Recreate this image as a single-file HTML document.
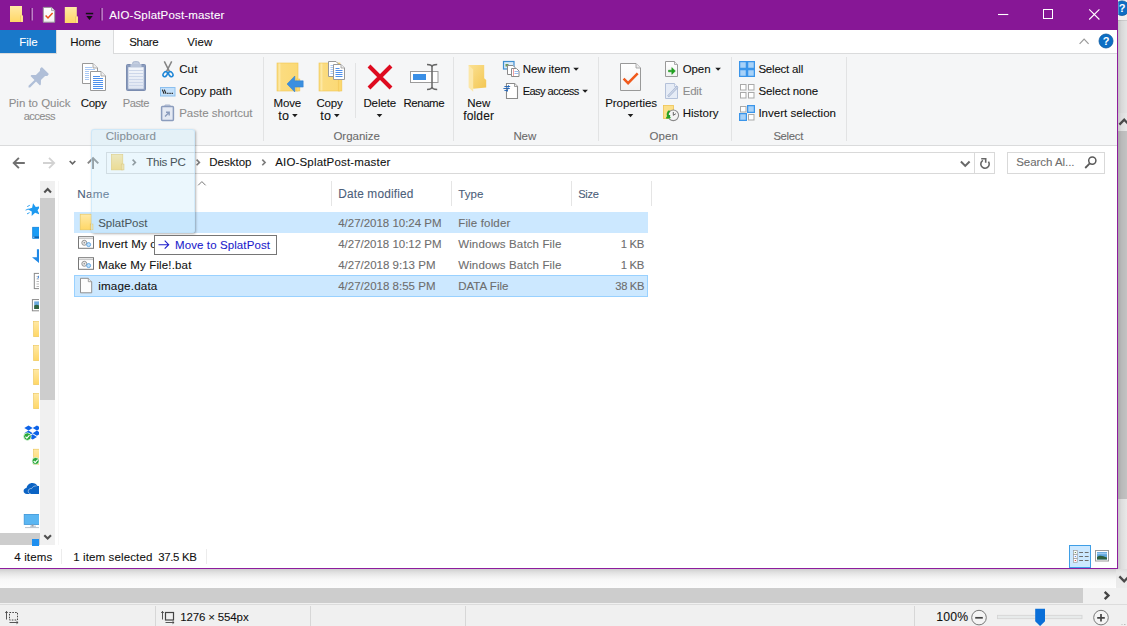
<!DOCTYPE html>
<html lang="en">
<head>
<meta charset="utf-8">
<title>AIO-SplatPost-master</title>
<style>
*{box-sizing:border-box;margin:0;padding:0}
html,body{width:1127px;height:626px;overflow:hidden;background:#fff}
body{position:relative;font-family:"Liberation Sans",sans-serif;font-size:11.5px;color:#111}
.a{position:absolute}
.t{position:absolute;white-space:nowrap;line-height:16px;height:16px;-webkit-text-stroke:.09px currentColor}
.g{color:#8d8d8d}
.d{color:#6d6d6d}
.h{color:#4c607a}
.lbl{color:#6b6b6b}
svg{position:absolute;left:0;top:0;overflow:hidden}
.sep{position:absolute;width:1px;background:#e2e3e4}
</style>
</head>
<body>

<!-- ============ Paint surroundings (outside the explorer window) ============ -->
<div class="a" style="left:1118px;top:0;width:9px;height:626px;background:#f0f0f0"></div>
<div class="a" style="left:1118px;top:20px;width:9px;height:93px;background:#ebebeb;border-top:1px solid #d6d6d6"></div>
<div class="a" style="left:1118px;top:113px;width:9px;height:475px;background:#f0f0f0"></div>
<div class="a" style="left:1118px;top:131px;width:9px;height:368px;background:#c9c9c9"></div>
<div class="a" style="left:1118px;top:20px;width:9px;height:549px;background:linear-gradient(90deg,rgba(0,0,0,.17) 0,rgba(0,0,0,.08) 40%,rgba(0,0,0,.03) 100%)"></div>
<div class="a" style="left:1116px;top:569px;width:11px;height:19px;background:linear-gradient(180deg,#dcdcdc 0,#e8e8e8 4px,#ececec 100%)"></div>
<div class="a" style="left:0;top:569px;width:1116px;height:19px;border-bottom-right-radius:3px;background:linear-gradient(180deg,#cdcdcd 0,#dfdfdf 3px,#eeeeee 7px,#f8f8f8 11px,#fcfcfc 100%)"></div>
<div class="a" style="left:0;top:588px;width:1127px;height:16px;background:#f0f0f0"></div>
<div class="a" style="left:0;top:588px;width:1083px;height:15px;background:#cdcdcd"></div>
<div class="a" style="left:0;top:604px;width:1127px;height:22px;background:#f0f0f0;border-top:1px solid #dcdcdc"></div>
<div class="a" style="left:155px;top:606px;width:1px;height:20px;background:#d7d7d7"></div>
<div class="a" style="left:310px;top:606px;width:1px;height:20px;background:#d7d7d7"></div>
<div class="a" style="left:465px;top:606px;width:1px;height:20px;background:#d7d7d7"></div>
<div class="a" style="left:914px;top:606px;width:1px;height:20px;background:#d7d7d7"></div>

<!-- ============ Explorer window ============ -->
<div class="a" style="left:0;top:0;width:1118px;height:569px;background:#fff;border-right:1px solid #8e1c9e;border-bottom:1px solid #8e1c9e"></div>
<div class="a" style="left:0;top:0;width:1118px;height:30px;background:#871796"></div>

<!-- tab row -->
<div class="a" style="left:0;top:30px;width:1117px;height:24px;background:#fff;border-bottom:1px solid #dadbdc"></div>
<div class="a" style="left:0;top:30px;width:56px;height:23px;background:#1979ca"></div>
<div class="a" style="left:56px;top:30px;width:58px;height:24px;background:#f5f6f7;border-left:1px solid #dadbdc;border-right:1px solid #dadbdc"></div>

<!-- ribbon -->
<div class="a" style="left:0;top:54px;width:1117px;height:92px;background:#f5f6f7;border-bottom:1px solid #dadbdc"></div>
<div class="sep" style="left:263px;top:57px;height:84px"></div>
<div class="sep" style="left:453px;top:57px;height:84px"></div>
<div class="sep" style="left:598px;top:57px;height:84px"></div>
<div class="sep" style="left:731px;top:57px;height:84px"></div>
<div class="sep" style="left:846px;top:57px;height:84px"></div>
<div class="sep" style="left:355px;top:63px;height:55px"></div>

<!-- address + search boxes -->
<div class="a" style="left:106px;top:152px;width:889px;height:22px;border:1px solid #d9d9d9;background:#fff"></div>
<div class="a" style="left:974px;top:153px;width:1px;height:20px;background:#d9d9d9"></div>
<div class="a" style="left:1007px;top:152px;width:98px;height:22px;border:1px solid #d9d9d9;background:#fff"></div>

<!-- nav pane scrollbar -->
<div class="a" style="left:58px;top:181px;width:1px;height:364px;background:#f7f7f7"></div>
<div class="a" style="left:40px;top:181px;width:15px;height:364px;background:#f0f0f0"></div>
<div class="a" style="left:40px;top:198px;width:15px;height:202px;background:#cdcdcd"></div>
<div class="a" style="left:0;top:533px;width:40px;height:12px;background:#cdcdcd"></div>

<!-- list header separators -->
<div class="a" style="left:331px;top:181px;width:1px;height:25px;background:#e5e5e5"></div>
<div class="a" style="left:451px;top:181px;width:1px;height:25px;background:#e5e5e5"></div>
<div class="a" style="left:571px;top:181px;width:1px;height:25px;background:#e5e5e5"></div>
<div class="a" style="left:651px;top:181px;width:1px;height:25px;background:#e5e5e5"></div>

<!-- rows -->
<div class="a" style="left:74px;top:212px;width:574px;height:21px;background:#cce8ff"></div>
<div class="a" style="left:74px;top:275px;width:574px;height:22px;background:#cce8ff;border:1px solid #99d1ff"></div>

<!-- status bar separators -->
<div class="a" style="left:61px;top:549px;width:1px;height:15px;background:#ececec"></div>
<div class="a" style="left:206px;top:549px;width:1px;height:15px;background:#ececec"></div>

<!-- ============ text ============ -->
<div class="t" id="t0" style="left:109.2px;top:7.0px;letter-spacing:0.173px;color:#fff">AIO-SplatPost-master</div>
<div class="t" id="t1" style="left:19.2px;top:34.0px;letter-spacing:-0.058px;color:#fff">File</div>
<div class="t" id="t2" style="left:70.2px;top:34.0px;letter-spacing:-0.097px;">Home</div>
<div class="t" id="t3" style="left:129.2px;top:34.0px;letter-spacing:-0.277px;">Share</div>
<div class="t" id="t4" style="left:187.2px;top:34.0px;letter-spacing:0.145px;">View</div>
<div class="t g" id="t5" style="left:8.7px;top:95.0px;letter-spacing:-0.017px;">Pin to Quick</div>
<div class="t g" id="t6" style="left:23.7px;top:108.0px;font-size:11.10px;letter-spacing:-0.539px;">access</div>
<div class="t" id="t7" style="left:80.7px;top:95.0px;letter-spacing:-0.265px;">Copy</div>
<div class="t g" id="t8" style="left:122.7px;top:95.0px;font-size:11.10px;letter-spacing:-0.415px;">Paste</div>
<div class="t" id="t9" style="left:179.2px;top:61.0px;letter-spacing:0.131px;">Cut</div>
<div class="t" id="t10" style="left:179.2px;top:83.0px;letter-spacing:0.040px;">Copy path</div>
<div class="t g" id="t11" style="left:179.2px;top:105.0px;letter-spacing:-0.015px;">Paste shortcut</div>
<div class="t lbl" id="t12" style="left:105.7px;top:128.0px;letter-spacing:0.118px;">Clipboard</div>
<div class="t" id="t13" style="left:273.4px;top:95.0px;letter-spacing:-0.081px;">Move</div>
<div class="t" id="t14" style="left:278.2px;top:108.0px;font-size:12.60px;letter-spacing:0.392px;">to</div>
<div class="t" id="t15" style="left:316.4px;top:95.0px;letter-spacing:-0.190px;">Copy</div>
<div class="t" id="t16" style="left:320.2px;top:108.0px;font-size:12.60px;letter-spacing:0.392px;">to</div>
<div class="t" id="t17" style="left:363.4px;top:95.0px;letter-spacing:-0.075px;">Delete</div>
<div class="t" id="t18" style="left:403.4px;top:95.0px;font-size:11.43px;letter-spacing:-0.398px;">Rename</div>
<div class="t lbl" id="t19" style="left:333.4px;top:128.0px;letter-spacing:-0.009px;">Organize</div>
<div class="t" id="t20" style="left:467.2px;top:95.0px;letter-spacing:0.095px;">New</div>
<div class="t" id="t21" style="left:463.2px;top:108.0px;font-size:12.04px;letter-spacing:0.148px;">folder</div>
<div class="t" id="t22" style="left:522.7px;top:61.0px;letter-spacing:-0.080px;">New item</div>
<div class="t" id="t23" style="left:522.7px;top:83.0px;font-size:11.10px;letter-spacing:-0.571px;">Easy access</div>
<div class="t lbl" id="t24" style="left:513.4px;top:128.0px;letter-spacing:-0.072px;">New</div>
<div class="t" id="t25" style="left:605.2px;top:95.0px;letter-spacing:-0.062px;">Properties</div>
<div class="t" id="t26" style="left:682.7px;top:61.0px;letter-spacing:-0.085px;">Open</div>
<div class="t g" id="t27" style="left:682.7px;top:83.0px;letter-spacing:-0.207px;">Edit</div>
<div class="t" id="t28" style="left:682.7px;top:105.0px;">History</div>
<div class="t lbl" id="t29" style="left:649.4px;top:128.0px;letter-spacing:0.115px;">Open</div>
<div class="t" id="t30" style="left:758.4px;top:61.0px;letter-spacing:-0.207px;">Select all</div>
<div class="t" id="t31" style="left:758.4px;top:83.0px;letter-spacing:-0.105px;">Select none</div>
<div class="t" id="t32" style="left:758.4px;top:105.0px;letter-spacing:0.015px;">Invert selection</div>
<div class="t lbl" id="t33" style="left:773.4px;top:128.0px;font-size:11.28px;letter-spacing:-0.285px;">Select</div>
<div class="t" id="t34" style="left:146.2px;top:154.0px;letter-spacing:-0.229px;">This PC</div>
<div class="t" id="t35" style="left:209.2px;top:154.0px;letter-spacing:0.016px;">Desktop</div>
<div class="t" id="t36" style="left:275.2px;top:154.0px;letter-spacing:0.173px;">AIO-SplatPost-master</div>
<div class="t d" id="t37" style="left:1016.2px;top:154.0px;letter-spacing:-0.043px;">Search Al...</div>
<div class="t h" id="t38" style="left:77.2px;top:186.0px;font-size:11.76px;letter-spacing:0.239px;">Name</div>
<div class="t h" id="t39" style="left:338.2px;top:186.0px;font-size:11.86px;letter-spacing:0.164px;">Date modified</div>
<div class="t h" id="t40" style="left:458.2px;top:186.0px;letter-spacing:0.091px;">Type</div>
<div class="t h" id="t41" style="left:578.2px;top:186.0px;font-size:11.10px;letter-spacing:-0.323px;">Size</div>
<div class="t" id="t42" style="left:98.2px;top:215.0px;letter-spacing:0.007px;">SplatPost</div>
<div class="t" id="t43" style="left:98.4px;top:236.0px;letter-spacing:0.133px;">Invert My c</div>
<div class="t" id="t44" style="left:98.2px;top:257.0px;letter-spacing:0.150px;">Make My File!.bat</div>
<div class="t" id="t45" style="left:98.2px;top:278.0px;font-size:11.64px;letter-spacing:0.177px;">image.data</div>
<div class="t d" id="t46" style="left:338.2px;top:215.0px;letter-spacing:-0.016px;">4/27/2018 10:24 PM</div>
<div class="t d" id="t47" style="left:338.2px;top:236.0px;letter-spacing:-0.016px;">4/27/2018 10:12 PM</div>
<div class="t d" id="t48" style="left:338.2px;top:257.0px;letter-spacing:0.007px;">4/27/2018 9:13 PM</div>
<div class="t d" id="t49" style="left:338.2px;top:278.0px;letter-spacing:0.007px;">4/27/2018 8:55 PM</div>
<div class="t d" id="t50" style="left:458.2px;top:215.0px;letter-spacing:0.164px;">File folder</div>
<div class="t d" id="t51" style="left:458.2px;top:236.0px;letter-spacing:0.129px;">Windows Batch File</div>
<div class="t d" id="t52" style="left:458.2px;top:257.0px;letter-spacing:0.129px;">Windows Batch File</div>
<div class="t d" id="t53" style="left:458.2px;top:278.0px;letter-spacing:0.026px;">DATA File</div>
<div class="t d" id="t54" style="left:620.8px;top:236.0px;font-size:11.38px;letter-spacing:-0.343px;">1 KB</div>
<div class="t d" id="t55" style="left:620.8px;top:257.0px;font-size:11.38px;letter-spacing:-0.343px;">1 KB</div>
<div class="t d" id="t56" style="left:615.3px;top:278.0px;font-size:11.20px;letter-spacing:-0.337px;">38 KB</div>
<div class="t" id="t57" style="left:14.2px;top:549.0px;letter-spacing:0.175px;">4 items</div>
<div class="t" id="t58" style="left:73.2px;top:549.0px;letter-spacing:0.129px;">1 item selected</div>
<div class="t" id="t59" style="left:158.2px;top:549.0px;font-size:11.40px;letter-spacing:-0.319px;">37.5 KB</div>
<div class="t" id="t60" style="left:180.2px;top:609.0px;letter-spacing:-0.144px;">1276 × 554px</div>
<div class="t" id="t61" style="left:936.2px;top:609.0px;font-size:12.28px;letter-spacing:0.231px;">100%</div>

<!-- ============ icons (below overlays) ============ -->
<svg width="1127" height="626" viewBox="0 0 1127 626">

<defs>
 <linearGradient id="fy" x1="0" y1="0" x2="0" y2="1"><stop offset="0" stop-color="#ffe9a6"/><stop offset="1" stop-color="#ffd766"/></linearGradient>
 <linearGradient id="fy2" x1="0" y1="0" x2="1" y2="0"><stop offset="0" stop-color="#e8b94a"/><stop offset=".35" stop-color="#ffe08a"/><stop offset="1" stop-color="#ffe08a"/></linearGradient>
 <linearGradient id="pg" x1="0" y1="0" x2="0" y2="1"><stop offset="0" stop-color="#ffffff"/><stop offset="1" stop-color="#f1f1f1"/></linearGradient>
</defs>
<!-- title bar: folder -->
<g id="tb-folder1">
 <rect x="10" y="6" width="12" height="16" fill="url(#fy)"/>
 <rect x="20" y="15.4" width="3" height="6.6" fill="url(#fy2)"/>
</g>
<g id="tb-sep1"><rect x="30.2" y="8" width="1.2" height="12.5" fill="#66106f"/><rect x="31.6" y="8" width="1.3" height="12.5" fill="#c28ecb"/></g>
<g id="tb-props">
 <path d="M43.3 7.4h8.2l3.2 3.2v11.6H43.3z" fill="url(#pg)" stroke="#9b9b9b" stroke-width="1"/>
 <path d="M51.5 7.4v3.2h3.2" fill="#e6e6e6" stroke="#9b9b9b" stroke-width=".8"/>
 <path d="M45.6 15.4l2.4 2.5 4.6-4.9" fill="none" stroke="#e8501a" stroke-width="1.5"/>
</g>
<g id="tb-folder2">
 <rect x="64.8" y="7" width="12" height="16" fill="url(#fy)"/>
 <rect x="75" y="16.4" width="3" height="6.6" fill="url(#fy2)"/>
</g>
<g id="tb-dd"><rect x="85.8" y="12.8" width="7.4" height="1.5" fill="#111"/><path d="M86.3 16h6.4l-3.2 4z" fill="#111"/></g>
<g id="tb-sep2"><rect x="100.1" y="8" width="1.2" height="12.5" fill="#66106f"/><rect x="101.5" y="8" width="1.3" height="12.5" fill="#c28ecb"/></g>

<!-- window controls -->
<g id="wc" fill="none" stroke="#fff" stroke-width="1.1">
 <path d="M998 14.500h10.300"/>
 <rect x="1043.500" y="9.500" width="9" height="9" stroke-width="1"/>
 <path d="M1089.2 9.3l10.2 10.2M1099.4 9.3l-10.2 10.2"/>
</g>
<!-- ribbon collapse chevron + help -->
<path d="M1079.6 43.8l4.5-4.7 4.5 4.7" fill="none" stroke="#9a9a9a" stroke-width="1.2"/>
<g id="help">
 <circle cx="1106" cy="41" r="7" fill="#0c6ec4" stroke="#0a58a0" stroke-width=".8"/>
</g>

<text x="1106" y="45" text-anchor="middle" font-family="Liberation Sans, sans-serif" font-weight="bold" font-size="11" fill="#fff">?</text>
<clipPath id="rclip"><rect x="1118.300" y="0" width="9" height="626"/></clipPath>
<g clip-path="url(#rclip)"><circle cx="1122" cy="8.200" r="7.300" fill="#0c6ec4" stroke="#0a58a0" stroke-width=".8"/>
<text x="1122" y="12.300" text-anchor="middle" font-family="Liberation Sans, sans-serif" font-weight="bold" font-size="11" fill="#fff">?</text></g>

<defs>
 <linearGradient id="fold" x1="0" y1="0" x2="1" y2="0"><stop offset="0" stop-color="#f7d774"/><stop offset=".12" stop-color="#fde8a4"/><stop offset=".2" stop-color="#fbdc80"/><stop offset="1" stop-color="#fbd974"/></linearGradient>
 <linearGradient id="nf" x1="0" y1="0" x2="1" y2="1"><stop offset="0" stop-color="#fbe193"/><stop offset="1" stop-color="#f3c652"/></linearGradient>
 <linearGradient id="clip" x1="0" y1="0" x2="0" y2="1"><stop offset="0" stop-color="#f3f6fb"/><stop offset="1" stop-color="#dfe6f2"/></linearGradient>
</defs>
<!-- Pin to Quick access (disabled) -->
<g id="i-pin" transform="translate(35.75 80.2) rotate(45)" fill="#b0bfd8" stroke="none">
 <path d="M-4.3 -13.600h8.600a.8 .8 0 0 1 .8 .8v1.600l-1.500 1.700v5.700l3.100 3.300v1.200h-5.600v8.400l-1.100 1.100l-1.100 -1.100v-8.400h-5.600v-1.200l3.100 -3.300v-5.700l-1.500 -1.700v-1.600a.8 .8 0 0 1 .8 -.8z"/>
</g>
<!-- Copy -->
<g id="i-copy">
 <path d="M82.5 63.5h10.5l4.5 4.5v15.5h-15z" fill="#fff" stroke="#999"/>
 <path d="M93 63.5v4.5h4.5" fill="#efefef" stroke="#999" stroke-width=".8"/>
 <g stroke="#a9c9f5" stroke-width="1"><path d="M85 67.5h7M85 69.5h10M85 71.5h4M85 73.5h4M85 75.5h4M85 77.5h4M85 79.5h4"/></g>
 <path d="M90.5 71.5h10.5l4.500 4.5v14.500h-15z" fill="#fff" stroke="#999"/>
 <path d="M101 71.500v4.500h4.500" fill="#efefef" stroke="#999" stroke-width=".8"/>
 <g stroke="#4d90ec" stroke-width="1"><path d="M93 76.500h7M93 78.500h10M93 80.500h10M93 82.500h10M93 84.500h10M93 86.500h10M93 88.500h10"/></g>
</g>
<!-- Paste (disabled look) -->
<g id="i-paste">
 <rect x="132.600" y="61.625" width="6.750" height="4.500" rx="1.800" fill="#c4cee0" stroke="#9aa9c6" stroke-width=".8"/>
 <rect x="126.500" y="64.500" width="19" height="26" rx="1" fill="#8b9cbd" stroke="#7a8cb0"/>
 <rect x="128.300" y="67.200" width="15.400" height="21.600" fill="url(#clip)"/>
 <g stroke="#cdd7ea" stroke-width="1"><path d="M128.300 70.500h15.400M128.300 73.500h15.400M128.300 76.500h15.400M128.300 79.500h15.400M128.300 82.500h15.400M128.300 85.500h15.400"/></g>
 <rect x="130.500" y="64" width="11" height="3.200" fill="#b9c5da"/>
</g>
<!-- Cut -->
<g id="i-cut">
 <path d="M164.300 61.300l5.200 10.400M171.700 61.300l-5.200 10.400" stroke="#848484" stroke-width="1.500" fill="none"/>
 <ellipse cx="165.200" cy="74.200" rx="1.900" ry="2.700" fill="none" stroke="#1e86d6" stroke-width="1.500" transform="rotate(35 165.200 74.200)"/>
 <ellipse cx="170.800" cy="74.200" rx="1.900" ry="2.700" fill="none" stroke="#1e86d6" stroke-width="1.500" transform="rotate(-35 170.800 74.200)"/>
</g>
<!-- Copy path -->
<g id="i-cpath">
 <rect x="160.500" y="87.500" width="14.500" height="8.500" fill="#c3e0fa" stroke="#8cc0ef"/>
 <path d="M162.300 89.600l1.800 4.200M164.300 89.600l1.800 4.200" stroke="#222" stroke-width="1.100"/>
 <path d="M167.200 93.300h1.300M169.400 93.300h1.300M171.600 93.300h1.300" stroke="#222" stroke-width="1.200"/>
</g>
<!-- Paste shortcut (disabled) -->
<g id="i-pshort">
 <rect x="164.700" y="104.900" width="5.600" height="3" rx="1" fill="#c4cee0" stroke="#9aa9c6" stroke-width=".7"/>
 <rect x="161.600" y="106.600" width="11.800" height="13.800" rx=".8" fill="#e4e9f3" stroke="#8b9cbd" stroke-width="1.500"/>
 <path d="M165 116.500l4-4M166 112.300h3.200v3.200" stroke="#8b9cbd" stroke-width="1.400" fill="none"/>
</g>

<!-- Move to -->
<g id="i-move">
 <rect x="277" y="63" width="21" height="28" fill="url(#fold)"/>
 <rect x="277" y="63" width="21" height="28" fill="none" stroke="#f1c653" stroke-width=".6"/>
 <rect x="296.200" y="79" width="3.700" height="12" fill="#fbd86f" stroke="#eec250" stroke-width=".5"/>
 <path d="M287 84l7.800-8v4.800h8.400v6.300h-8.400v4.900z" fill="#3a8fdf" stroke="#2f7fd0" stroke-width=".5"/>
</g>
<!-- Copy to -->
<g id="i-copyto">
 <rect x="319" y="63" width="21" height="28" fill="url(#fold)"/>
 <rect x="319" y="63" width="21" height="28" fill="none" stroke="#f1c653" stroke-width=".6"/>
 <rect x="338.200" y="79" width="3.700" height="12" fill="#fbd86f" stroke="#eec250" stroke-width=".5"/>
 <path d="M328.500 61.500h7.500l3.500 3.500v11.500h-11z" fill="#fff" stroke="#999"/>
 <g stroke="#a9c9f5" stroke-width="1"><path d="M330.500 65.500h5M330.500 67.500h3M330.500 69.500h3M330.500 71.500h3M330.500 73.500h3"/></g>
 <path d="M333.500 64.500h7.500l3.500 3.500v11.500h-11z" fill="#fff" stroke="#999"/>
 <path d="M341 64.500v3.500h3.500" fill="#eee" stroke="#999" stroke-width=".8"/>
 <g stroke="#4d90ec" stroke-width="1"><path d="M335.500 68.500h4M335.500 70.500h7M335.500 72.500h7M335.500 74.500h7M335.500 76.500h7"/></g>
</g>
<!-- Delete -->
<path id="i-del" d="M369 66l22 22M391 66l-22 22" stroke="#de0a1f" stroke-width="4" fill="none"/>
<!-- Rename -->
<g id="i-ren">
 <rect x="410.500" y="71.500" width="27.500" height="11" fill="#fff" stroke="#9c9c9c"/>
 <rect x="413" y="74" width="13" height="6" fill="#3a8fe6"/>
 <path d="M427 64.600c3 0 5 .6 5 2.600v19.600c0 2-2 2.600-5 2.600M437.200 64.600c-3 0-5.200.6-5.200 2.600M437.200 89.400c-3 0-5.200-.6-5.200-2.600" fill="none" stroke="#666" stroke-width="1.500"/>
</g>
<!-- New folder -->
<g id="i-newf">
 <path d="M468.600 65h15.600v13.200l2 1.800v7.600l-13 1.200z" fill="url(#nf)"/>
 <path d="M468.600 65l4.600 4.600v22.200l-4.600-4.200z" fill="#fce7a8"/>
</g>
<!-- New item -->
<g id="i-newi">
 <rect x="503.500" y="61.500" width="10.500" height="7.500" fill="#d6e9f8" stroke="#3e8ed0" stroke-width="1.200"/>
 <rect x="505.500" y="64" width="3" height="2.500" fill="#6a9a58"/>
 <path d="M507.500 65.500h5.500l2 2v7h-7.500z" fill="#fff" stroke="#8a8a8a"/>
 <path d="M511.500 68.500h5l2.500 2.500v5.500h-7.500z" fill="#fff" stroke="#8a8a8a"/>
 <path d="M513.500 69v7" stroke="#e88" stroke-width=".8"/>
 <path d="M514.500 71.500h4M514.500 73.500h4" stroke="#8fb5ee" stroke-width=".9"/>
</g>
<!-- Easy access -->
<g id="i-easy">
 <path d="M506.500 83.500h8l3 3v12h-11z" fill="#fff" stroke="#8a8a8a" stroke-width="1.100"/>
 <path d="M514.500 83.500v3h3" fill="#eee" stroke="#8a8a8a" stroke-width=".8"/>
 <path d="M504.400 86.500h5.800M503.400 88.500h6.400M504.400 90.500h3.200" stroke="#1f62b4" stroke-width=".9" fill="none"/>
 <path d="M508.600 85.200l-1.500 6.600" stroke="#1f62b4" stroke-width=".9" fill="none"/>
</g>
<!-- Properties -->
<g id="i-prop">
 <path d="M620.500 63.500h15.500l4.500 4.500v22.500h-20z" fill="url(#pg)" stroke="#999"/>
 <path d="M636 63.500v4.500h4.500" fill="#ececec" stroke="#999" stroke-width=".8"/>
 <path d="M623.600 78.600l4.500 4.600 9.600-9.800" fill="none" stroke="#f05a1c" stroke-width="2.500"/>
</g>
<!-- Open -->
<g id="i-open">
 <path d="M665.500 61.500h9l3 3v12h-12z" fill="url(#pg)" stroke="#999"/>
 <path d="M674.500 61.500v3h3" fill="#ececec" stroke="#999" stroke-width=".8"/>
 <path d="M668.500 70.200h3.300v-2.600l3.600 3.400-3.600 3.400v-2.600h-3.300z" fill="#1fa51f" stroke="#178a17" stroke-width=".5"/>
</g>
<!-- Edit (disabled) -->
<g id="i-edit">
 <path d="M665.500 83.500h9l3 3v12h-12z" fill="#e6ecf6" stroke="#b4c1d9"/>
 <path d="M674.500 83.500v3h3" fill="#f3f6fb" stroke="#b4c1d9" stroke-width=".8"/>
 <path d="M668 96.500l9.600-9.800" stroke="#a9b7d2" stroke-width="2.400"/>
 <path d="M668.300 96.200l8.900-9.100" stroke="#eef2f9" stroke-width=".8"/>
</g>
<!-- History -->
<g id="i-hist">
 <rect x="663.500" y="105.500" width="10" height="13" fill="#fce08a" stroke="#efc452" stroke-width=".8"/>
 <circle cx="673.300" cy="115.300" r="5.300" fill="#f4f4f4" stroke="#8a8a8a" stroke-width="1.100"/>
 <path d="M673.300 115.300v-3.300M673.300 115.300l2.600-1.600" stroke="#555" stroke-width=".9"/>
 <path d="M669.600 110.800c-2.400 1.600-2.600 4.800-.6 6.600l-2.800.4M669 117.400l.2-2.600" stroke="#23a023" stroke-width="2" fill="none"/>
</g>
<!-- Select all -->
<g id="i-sall" fill="#a8d2f8" stroke="#3a95ea" stroke-width="1.250">
 <rect x="739.625" y="61.625" width="6.750" height="6.750"/><rect x="747.625" y="61.625" width="6.750" height="6.750"/>
 <rect x="739.625" y="69.625" width="6.750" height="6.750"/><rect x="747.625" y="69.625" width="6.750" height="6.750"/>
</g>
<!-- Select none -->
<g id="i-snone" fill="#fff" stroke="#a9a9a9" stroke-width="1">
 <rect x="740.500" y="84.500" width="5.500" height="5.500"/><rect x="748.500" y="84.500" width="5.500" height="5.500"/>
 <rect x="740.500" y="92.500" width="5.500" height="5.500"/><rect x="748.500" y="92.500" width="5.500" height="5.500"/>
</g>
<!-- Invert selection -->
<g id="i-sinv">
 <rect x="740.500" y="106.500" width="5.500" height="5.500" fill="#fff" stroke="#a9a9a9"/>
 <rect x="748.500" y="114.500" width="5.500" height="5.500" fill="#fff" stroke="#a9a9a9"/>
 <rect x="747.625" y="105.625" width="6.750" height="6.750" fill="#a8d2f8" stroke="#3a95ea" stroke-width="1.250"/>
 <rect x="739.625" y="113.625" width="6.750" height="6.750" fill="#a8d2f8" stroke="#3a95ea" stroke-width="1.250"/>
</g>
<!-- dropdown triangles -->
<g id="dd" fill="#1e1e1e">
 <path d="M292.100 114.100h5.600l-2.800 3.100z"/><path d="M334 114.100h5.600l-2.800 3.100z"/>
 <path d="M376.700 114.100h5.600l-2.800 3.100z"/><path d="M627.700 114.100h5.600l-2.800 3.100z"/>
 <path d="M573.300 67.700h5.600l-2.800 3.100z"/><path d="M582.300 89.700h5.600l-2.800 3.100z"/>
 <path d="M715.300 67.700h5.600l-2.800 3.100z"/>
</g>


<!-- nav arrows -->
<g id="nav-arrows" fill="none" stroke-linecap="butt">
 <path d="M24.800 163h-10.800M18.900 157.800l-5.200 5.200 5.200 5.200" stroke="#707070" stroke-width="1.900"/>
 <path d="M43 163h10.800M49 157.800l5.200 5.200-5.200 5.200" stroke="#d2d2d2" stroke-width="1.800"/>
 <path d="M69.700 161l2.800 2.800 2.800-2.800" stroke="#666" stroke-width="1.700"/>
 <path d="M93.050 169v-10.600M87.800 163.400l5.250-5.250 5.250 5.250" stroke="#858585" stroke-width="1.900"/>
</g>
<!-- address bar folder + chevrons -->
<g id="addr-folder">
 <rect x="111.300" y="154.300" width="11.500" height="15.600" fill="url(#fy)" stroke="#ecc455" stroke-width=".6"/>
 <rect x="121.200" y="164" width="2.800" height="5.900" fill="#ffe292" stroke="#e6ba4a" stroke-width=".5"/>
</g>
<g id="addr-chev" fill="none" stroke="#7c7c7c" stroke-width="1.600">
 <path d="M132.600 159.600l2.800 2.800-2.800 2.800"/>
 <path d="M196.600 159.600l2.800 2.800-2.800 2.800"/>
 <path d="M262.300 159.600l2.800 2.800-2.800 2.800"/>
 <path d="M960.900 161.500l4.350 4.350 4.350-4.350" stroke="#686868" stroke-width="2"/>
</g>
<!-- refresh -->
<g id="refresh" fill="none" stroke="#686868" stroke-width="1.600">
 <path d="M988.450 161.600a4.200 4.200 0 1 1 -5.500 -1.250"/>
 <path d="M981.200 158.700h4.500v4"/>
</g>
<!-- search magnifier -->
<g id="mag" fill="none" stroke="#5a5a5a" stroke-width="1.500">
 <circle cx="1092.300" cy="160.600" r="3.600"/>
 <path d="M1089.800 163.400l-4.600 4.600" stroke-width="1.800"/>
</g>
<!-- header sort arrow -->
<path d="M198.200 185.300l3.700-3.700 3.700 3.700" fill="none" stroke="#777" stroke-width="1"/>

<!-- list icons -->
<g id="li-folder">
 <rect x="80.200" y="214.200" width="11.300" height="15.600" fill="url(#fy)" stroke="#ecc455" stroke-width=".6"/>
 <rect x="90.200" y="224" width="2.800" height="5.800" fill="#ffe292" stroke="#e6ba4a" stroke-width=".5"/>
</g>
<g id="li-bat1">
 <rect x="78.500" y="236.700" width="15" height="11.600" fill="#fff" stroke="#777" stroke-width="1"/>
 <path d="M79 238.600h14" stroke="#b5b5b5" stroke-width=".8"/>
 <circle cx="84.300" cy="242.800" r="2.500" fill="#e9e9e9" stroke="#8a8a8a" stroke-width=".9"/>
 <circle cx="84.300" cy="242.800" r=".8" fill="#8a8a8a"/>
 <circle cx="88.600" cy="244.600" r="2" fill="#bfe0fb" stroke="#5aa2e0" stroke-width=".9"/>
</g>
<g id="li-bat2">
 <rect x="78.500" y="257.700" width="15" height="11.600" fill="#fff" stroke="#777" stroke-width="1"/>
 <path d="M79 259.600h14" stroke="#b5b5b5" stroke-width=".8"/>
 <circle cx="84.300" cy="263.800" r="2.500" fill="#e9e9e9" stroke="#8a8a8a" stroke-width=".9"/>
 <circle cx="84.300" cy="263.800" r=".8" fill="#8a8a8a"/>
 <circle cx="88.600" cy="265.600" r="2" fill="#bfe0fb" stroke="#5aa2e0" stroke-width=".9"/>
</g>
<g id="li-file">
 <path d="M80.500 278.300h7.800l3.400 3.400v11.100h-11.200z" fill="#fdfdfd" stroke="#8f8f8f" stroke-width="1"/>
 <path d="M88.300 278.300v3.400h3.400" fill="#f1f1f1" stroke="#8f8f8f" stroke-width=".8"/>
</g>

<!-- explorer status bar view buttons -->
<g id="views">
 <rect x="1069.500" y="545.500" width="21" height="22" fill="#cce8ff" stroke="#3f9ee6" stroke-width="1"/>
 <g fill="#fff" stroke="#9a9a9a" stroke-width=".7"><rect x="1073.400" y="550.500" width="3.800" height="3.800"/><rect x="1073.400" y="554.500" width="3.800" height="3.800"/><rect x="1073.400" y="558.500" width="3.800" height="3.800"/></g>
 <rect x="1074.800" y="552" width="1" height="1" fill="#3a7a3a"/><rect x="1074.800" y="556" width="1" height="1" fill="#2f6fe0"/><rect x="1074.800" y="560" width="1" height="1" fill="#e02020"/>
 <path d="M1079.200 552.500h3.800M1084.800 552.500h3.800M1079.200 556.500h3.800M1084.800 556.500h3.800M1079.200 560.500h3.800M1084.800 560.500h3.800" stroke="#6e6e6e" stroke-width="1.100"/>
 <rect x="1095.500" y="550.500" width="13" height="10.500" fill="#fff" stroke="#9a9a9a" stroke-width="1"/>
 <rect x="1097" y="552" width="10" height="7.500" fill="#5fa7dc"/>
 <path d="M1097 559.500v-2.500c3-2.500 6-1 10 .5v2z" fill="#2d5f3c"/>
 <path d="M1097 553.500h10" stroke="#9ccaf0" stroke-width="1.500"/>
</g>


<!-- nav pane icons (clipped at x=40 by the scrollbar) -->
<g id="np" clip-path="url(#npclip)">
 <clipPath id="npclip"><rect x="0" y="180" width="39" height="366"/></clipPath>
 <!-- quick access star -->
 <path transform="rotate(-12 34.4 209.6)" d="M34.400 203.100l1.850 4.250 4.600.400-3.500 3.050 1.050 4.500-4-2.400-4 2.400 1.050-4.500-3.500-3.050 4.600-.4z" fill="#1e9af0"/>
 <path d="M29.800 205.300l-2.600 1.300M28.600 208.900l-3 1.300M29.600 212.600l-2.600 1.300" stroke="#1e9af0" stroke-width=".9"/>
 <!-- desktop -->
 <rect x="32.700" y="227.300" width="9" height="11" fill="#1a9cf5" stroke="#0f82dc" stroke-width=".8"/>
 <rect x="33.100" y="236.400" width="8" height="1.600" fill="#0c64b4"/>
 <rect x="33.300" y="236.700" width="1" height="1" fill="#fff"/>
 <!-- downloads -->
 <path d="M36.900 249.200h4v15.300l-8.900-7.200h4.900z" fill="#2189e6"/>
 <!-- documents -->
 <rect x="34.300" y="273.400" width="9" height="15.200" fill="#fff" stroke="#8a8a8a" stroke-width="1"/>
 <path d="M36.500 276.500h4M36.500 279h4M36.500 281.500h4M36.500 284h4M36.500 286.500h4" stroke="#a8a8a8" stroke-width=".8"/>
 <path d="M37.800 278.500l1.500-3 1.500 3" stroke="#2b78d8" stroke-width="1" fill="none"/>
 <!-- pictures -->
 <rect x="32.400" y="299.600" width="12" height="11.200" fill="#fff" stroke="#8a8a8a" stroke-width="1"/>
 <rect x="34.200" y="301.400" width="8" height="7.600" fill="#6aa9dd"/>
 <path d="M34.200 309v-3.400c2-1.400 4-.8 6 .6v2.800z" fill="#31633f"/>
 <!-- folders -->
 <g fill="url(#fy)" stroke="#ecc455" stroke-width=".6">
  <rect x="33.600" y="321.400" width="9" height="15.200"/><rect x="33.600" y="345.400" width="9" height="15.200"/>
  <rect x="33.600" y="369.400" width="9" height="15.200"/><rect x="33.600" y="393.400" width="9" height="15.200"/>
  <rect x="33.600" y="449.200" width="9" height="15"/>
 </g>
 <!-- dropbox -->
 <g fill="#0d63e8">
  <path d="M28.500 425.400l4.200 2.600-4.200 2.600-4.200-2.600z"/><path d="M36.900 425.400l4.200 2.600-4.200 2.600-4.200-2.600z"/>
  <path d="M28.500 430.600l4.200 2.600-4.200 2.600-4.200-2.600z"/><path d="M36.900 430.600l4.200 2.600-4.200 2.600-4.200-2.600z"/>
  <path d="M32.700 434.300l4.200 2.600-4.200 2.600-4.200-2.600z"/>
 </g>
 <circle cx="27.400" cy="436.600" r="3.800" fill="#2aa83a" stroke="#eafbea" stroke-width=".8"/>
 <path d="M25.400 436.600l1.500 1.600 2.600-3" stroke="#fff" stroke-width="1.100" fill="none"/>
 <circle cx="35.600" cy="461" r="3.600" fill="#2aa83a" stroke="#eafbea" stroke-width=".8"/>
 <path d="M33.700 461l1.500 1.600 2.600-3" stroke="#fff" stroke-width="1.100" fill="none"/>
 <!-- onedrive -->
 <path d="M27 494c-2.200 0-3.400-1.400-3.400-3 0-1.700 1.300-2.900 2.900-3 .5-2.800 2.800-5 5.800-5 2.300 0 4.200 1.200 5.200 3 3-.6 5.500 1.400 5.500 4 0 2.200-1.600 4-4 4z" fill="#0b63c4"/>
 <path d="M31 494c-1.800-.2-2.800-1.400-2.800-2.800 0-1.800 1.600-3 3.400-2.600 1-2 3-3 5-2.600" stroke="#fff" stroke-width=".7" fill="none" opacity=".7"/>
 <!-- this pc -->
 <rect x="24.200" y="514.400" width="17" height="10" fill="#5bb6f2" stroke="#3a95d8" stroke-width=".8"/>
 <path d="M30 526.200h6M25 527.600h15" stroke="#b9c2cc" stroke-width="1"/>
 <path d="M32.500 524.500v2" stroke="#98a2ad" stroke-width="2"/>
 <!-- last item (network-ish blue) -->
 <rect x="32" y="539" width="9" height="8" fill="#1e8fef"/>
</g>

<!-- nav pane scrollbar arrows -->
<g fill="none" stroke="#505050" stroke-width="2.100">
 <path d="M44.300 192.400l3.350-3.400 3.350 3.400"/>
 <path d="M44.300 535.200l3.350 3.400 3.350-3.400"/>
</g>

<!-- paint: vertical scrollbar arrows (cut off at right edge) -->
<g fill="none" stroke="#4a4a4a" stroke-width="2.300">
 <path d="M1119.400 124.600l4.800-4.900 4.800 4.900"/>
 <path d="M1119.400 576.400l4.800 4.900 4.800-4.900"/>
 <path d="M1104.700 591.900l3.700 3.600-3.700 3.600" stroke="#444" stroke-width="2.400"/>
</g>

<!-- paint status: icons -->
<g id="ps-sel" fill="none" stroke="#444" stroke-width="1">
 <path d="M6.500 611.500v8M5.300 613l1.200-1.600 1.200 1.600" stroke-width=".9"/>
 <rect x="9.500" y="612.500" width="8" height="7.500" stroke-dasharray="1.600 1.200"/>
 <path d="M9.500 622.500h8.500M16.500 621.300l1.600 1.200-1.600 1.200" stroke-width=".9"/>
</g>
<g id="ps-size" fill="none" stroke="#444" stroke-width="1">
 <path d="M162.500 611.500v8M161.300 613l1.200-1.600 1.200 1.600" stroke-width=".9"/>
 <rect x="165.500" y="612.500" width="8" height="7.500" stroke-width="1.200"/>
 <path d="M165.500 622.500h8.500M172.500 621.300l1.600 1.200-1.600 1.200" stroke-width=".9"/>
</g>
<!-- zoom controls -->
<g id="zoom">
 <circle cx="979" cy="617.600" r="7.300" fill="#f4f4f4" stroke="#777" stroke-width="1"/>
 <path d="M975.200 617.800h7.600" stroke="#444" stroke-width="1.700"/>
 <rect x="997.500" y="615.300" width="84.500" height="3.400" fill="#e7eaea" stroke="#d3d3d3" stroke-width=".8"/>
 <path d="M1035.200 608.800h9.800v12.400l-4.900 4.900-4.900-4.900z" fill="#0a6fd8"/>
 <circle cx="1101" cy="617.600" r="7.300" fill="#f4f4f4" stroke="#777" stroke-width="1"/>
 <path d="M1097.200 617.800h7.600M1101 614v7.600" stroke="#444" stroke-width="1.700"/>
 <path d="M1124 624.500h1.500M1121.500 624.500h1" stroke="#bbb" stroke-width="1.200"/>
</g>

</svg>

<!-- ============ drag image + drop tooltip ============ -->
<div class="a" style="left:91px;top:129px;width:104px;height:104px;border-radius:3px;background:rgba(190,228,250,.31);border:1px solid rgba(186,224,250,.5);box-shadow:1px 1px 2.5px rgba(0,0,0,.3)"></div>
<div class="a" style="left:154px;top:235px;width:123px;height:20px;background:#fff;border:1px solid #767676"></div>
<svg width="1127" height="626" viewBox="0 0 1127 626">
 <path d="M158.500 244.700h10M164.700 240.700l4 4-4 4" fill="none" stroke="#1c1ccc" stroke-width="1.100"/>
</svg>
<div class="t" id="o0" style="left:175.0px;top:236.5px;letter-spacing:0.104px;color:#1c1ccc">Move to SplatPost</div>

</body>
</html>
